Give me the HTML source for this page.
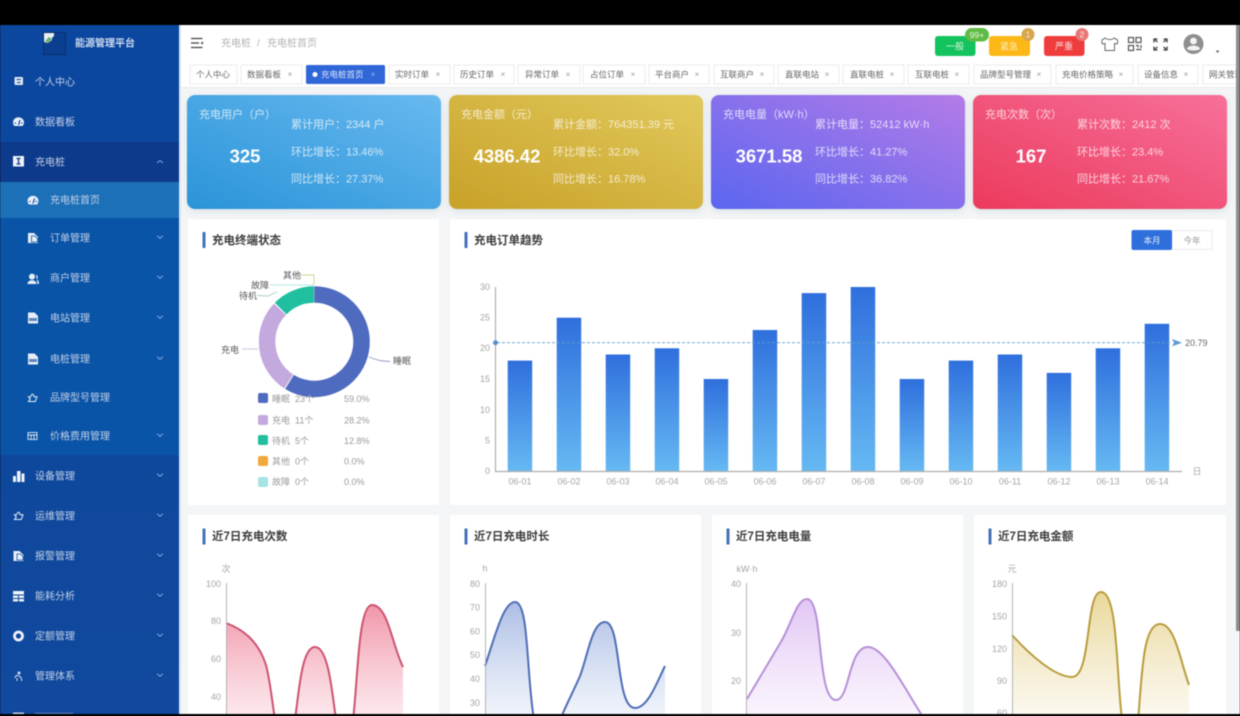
<!DOCTYPE html>
<html lang="zh-CN">
<head>
<meta charset="utf-8">
<title>能源管理平台</title>
<style>
html,body{margin:0;padding:0;background:#000;width:1240px;height:716px;overflow:hidden}
svg{display:block;filter:blur(.55px)}
text{font-family:"Liberation Sans","Noto Sans CJK SC",sans-serif;dominant-baseline:central;transform:translateY(.6px)}
.m{font-size:10px;fill:#c2d0e6}
.t{font-size:8.5px;fill:#666}
.x{font-size:8px;fill:#999;text-anchor:middle}
.k{font-size:11px;fill:#fff;fill-opacity:.74}
.n{font-size:18.5px;font-weight:700;fill:#fff;text-anchor:middle}
.h{font-size:11.5px;font-weight:700;fill:#3d3d3d}
.a{font-size:9px;fill:#a5a5a5}
.e{text-anchor:end}
.c{text-anchor:middle}
.l{font-size:9px;fill:#999}
.p{font-size:9px;fill:#555}
</style>
</head>
<body>
<svg width="1240" height="716" viewBox="0 0 1240 716" xmlns="http://www.w3.org/2000/svg">
<defs>
<linearGradient id="k1" x1="0" y1="1" x2="1" y2="0"><stop offset="0" stop-color="#2a94d8"/><stop offset="1" stop-color="#68b9f0"/></linearGradient>
<linearGradient id="k2" x1="0" y1="1" x2="1" y2="0"><stop offset="0" stop-color="#c8a128"/><stop offset="1" stop-color="#e2c95c"/></linearGradient>
<linearGradient id="k3" x1="0" y1="1" x2="1" y2="0"><stop offset="0" stop-color="#5a66f0"/><stop offset="1" stop-color="#b47be8"/></linearGradient>
<linearGradient id="k4" x1="0" y1="1" x2="1" y2="0"><stop offset="0" stop-color="#ec3a5c"/><stop offset="1" stop-color="#f7709a"/></linearGradient>
<linearGradient id="bar" x1="0" y1="0" x2="0" y2="1"><stop offset="0" stop-color="#2f6fdd"/><stop offset="1" stop-color="#66b9f3"/></linearGradient>
<linearGradient id="side" x1="0" y1="0" x2="0" y2="1"><stop offset="0" stop-color="#0c479f"/><stop offset="1" stop-color="#10499d"/></linearGradient>
<linearGradient id="f1" x1="0" y1="0" x2="0" y2="1"><stop offset="0" stop-color="#ee7a93" stop-opacity=".8"/><stop offset="1" stop-color="#fcdfe6" stop-opacity=".5"/></linearGradient>
<linearGradient id="f2" x1="0" y1="0" x2="0" y2="1"><stop offset="0" stop-color="#9db2e0" stop-opacity=".85"/><stop offset="1" stop-color="#eef3fb" stop-opacity=".55"/></linearGradient>
<linearGradient id="f3" x1="0" y1="0" x2="0" y2="1"><stop offset="0" stop-color="#dcbcf3" stop-opacity=".85"/><stop offset="1" stop-color="#faf3fd" stop-opacity=".55"/></linearGradient>
<linearGradient id="f4" x1="0" y1="0" x2="0" y2="1"><stop offset="0" stop-color="#e6d088" stop-opacity=".85"/><stop offset="1" stop-color="#fbf8ec" stop-opacity=".55"/></linearGradient>
<filter id="sh" x="-10%" y="-20%" width="120%" height="140%"><feDropShadow dx="0" dy="2" stdDeviation="4" flood-color="#8aa" flood-opacity=".28"/></filter>

<g id="chev"><polyline points="-3,-1.3 0,1.3 3,-1.3" fill="none" stroke="#7fa3d6" stroke-width="1"/></g>
<g id="gauge"><path d="M-4,4 A5.5,5.2 0 1 1 4,4 Z" fill="#e8eef8"/><path d="M0,3 L1.5,-2" stroke="#0c479f" stroke-width="1.2"/><path d="M-4,1h1.5M2.5,1h1.5" stroke="#0c479f" stroke-width=".9"/></g>
<g id="doc"><path d="M-5,-5 H1 L5,-1 V5 H-5 Z" fill="#e8eef8"/><path d="M-1.5,-2 H2 L4.5,.5 V4 H-1.5 Z" fill="#e8eef8" stroke="#0c4f9f" stroke-width=".8"/></g>
<g id="pdf"><path d="M-5,-5.5 H1.5 L5,-2 V5.5 H-5 Z" fill="#e8eef8"/><rect x="-4" y="0" width="8" height="3" fill="#5c86bd"/></g>
<g id="user"><circle cx="-1" cy="-2.4" r="3" fill="#e8eef8"/><path d="M-5.5,5 C-5.5,0 3.5,0 3.5,5 Z" fill="#e8eef8"/><path d="M3,-4.5 C5.5,-3 5,0 3.5,.5 C5.500,1 6,3 6,5 H4.5" fill="#e8eef8"/></g>
<g id="bag"><path d="M-4,-1.2 H-2 L-.5,-3.8 C1,-3.800 1.500,-2.500 1.500,-1.200 H4.500 L2.800,3.500 H-4 L-2.200,1 Z" fill="none" stroke="#e8eef8" stroke-width="1"/></g>
</defs>

<!-- page base -->
<rect x="0" y="0" width="1240" height="716" fill="#f4f5f7"/>

<!-- header -->
<rect x="179" y="25" width="1057" height="35" fill="#fff"/>
<rect x="179" y="60" width="1057" height="27" fill="#fff"/>
<rect x="179" y="87" width="1057" height="1" fill="#e9eaec"/>
<path d="M191,38.5h11.5M191,43h8M191,47.5h11.5" stroke="#444" stroke-width="1.2" fill="none"/>
<path d="M203,41.5 L200.5,43 L203,44.5Z" fill="#444"/>
<text x="221" y="43.5" style="font-size:10px;fill:#b3b3b3">充电桩</text>
<text x="257" y="43.5" style="font-size:10px;fill:#b3b3b3">/</text>
<text x="267" y="43.5" style="font-size:10px;fill:#b3b3b3">充电桩首页</text>

<rect x="935" y="36" width="40.5" height="20" rx="3" fill="#13c35e"/>
<text x="955" y="46" class="c" style="font-size:9px;fill:#d8f8df">一般</text>
<rect x="965" y="28" width="24" height="13.5" rx="6.7" fill="#60bb46"/>
<text x="977" y="34.5" class="c" style="font-size:8.5px;fill:#e8f7dc">99+</text>
<rect x="989" y="36" width="41" height="20" rx="3" fill="#fcb816"/>
<text x="1009" y="46" class="c" style="font-size:9px;fill:#ffeec0">紧急</text>
<circle cx="1028" cy="34.5" r="6.5" fill="#d9a650"/>
<text x="1028" y="34.5" class="c" style="font-size:8px;fill:#f8e4bb">1</text>
<rect x="1044" y="36" width="40.5" height="20" rx="3" fill="#ef3d3d"/>
<text x="1064" y="46" class="c" style="font-size:9px;fill:#ffdcdc">严重</text>
<circle cx="1082" cy="34.5" r="6.5" fill="#ea7777"/>
<text x="1082" y="34.5" class="c" style="font-size:8px;fill:#ffe6e6">2</text>

<path d="M1105.500,38 L1102.500,39.500 C1101.500,40.500 1101.500,42.500 1102.500,44 L1105,43.500 V50.500 H1114.500 V43.500 L1117,44 C1118,42.500 1118,40.500 1117,39.500 L1114,38 C1112.500,40 1107,40 1105.500,38 Z" fill="none" stroke="#666" stroke-width="1"/>
<g fill="none" stroke="#555" stroke-width="1.2">
<rect x="1128.500" y="37.500" width="5" height="5"/><rect x="1136" y="37.500" width="5" height="5"/><rect x="1128.500" y="45.500" width="5" height="5"/>
<path d="M1136,45.500h2v2M1141,45v3M1136,49.500h5.500"/>
</g>
<g fill="none" stroke="#444" stroke-width="1.300">
<path d="M1154,39l3.500,3M1154,42.500v-3.500h3.500M1167,39l-3.500,3M1167,42.500v-3.500h-3.500M1154,50l3.500,-3M1154,46.500v3.500h3.500M1167,50l-3.500,-3M1167,46.500v3.500h-3.500"/>
</g>
<circle cx="1193.500" cy="44" r="10" fill="#8f8f8f"/>
<circle cx="1193.500" cy="41" r="3.400" fill="#f3f3f3"/>
<path d="M1187,49 C1187.500,44.500 1199.500,44.500 1200,49 C1198,51 1189,51 1187,49Z" fill="#f3f3f3"/>
<path d="M1215.800,50.600 h3.600 l-1.800,2.400Z" fill="#555"/>

<!-- tabs -->
<g fill="#fff" stroke="#e8e8e8" stroke-width=".8">
<rect x="190" y="65" width="47" height="19"/><rect x="241" y="65" width="61" height="19"/>
<rect x="389" y="65" width="61" height="19"/><rect x="454" y="65" width="60" height="19"/>
<rect x="518" y="65" width="62" height="19"/><rect x="583" y="65" width="62" height="19"/>
<rect x="649" y="65" width="60" height="19"/><rect x="714" y="65" width="60" height="19"/>
<rect x="778" y="65" width="61" height="19"/><rect x="843" y="65" width="61" height="19"/>
<rect x="908" y="65" width="61" height="19"/><rect x="974" y="65" width="77" height="19"/>
<rect x="1056" y="65" width="77" height="19"/><rect x="1138" y="65" width="60" height="19"/>
<rect x="1203" y="65" width="40" height="19"/>
</g>
<rect x="306" y="65" width="79" height="19" rx="1.500" fill="#2f66d8"/>
<circle cx="315" cy="74.500" r="2.500" fill="#fff"/>
<text x="321" y="74" style="font-size:8.500px;fill:#dce6fa">充电桩首页</text>
<text x="373" y="74" class="x" style="fill:#9fb8ef">×</text>
<text x="196" y="74" class="t">个人中心</text>
<text x="247" y="74" class="t">数据看板</text><text x="290" y="74" class="x">×</text>
<text x="395" y="74" class="t">实时订单</text><text x="438" y="74" class="x">×</text>
<text x="460" y="74" class="t">历史订单</text><text x="503" y="74" class="x">×</text>
<text x="525" y="74" class="t">异常订单</text><text x="568" y="74" class="x">×</text>
<text x="590" y="74" class="t">占位订单</text><text x="633" y="74" class="x">×</text>
<text x="655" y="74" class="t">平台商户</text><text x="697" y="74" class="x">×</text>
<text x="720" y="74" class="t">互联商户</text><text x="762" y="74" class="x">×</text>
<text x="785" y="74" class="t">直联电站</text><text x="827" y="74" class="x">×</text>
<text x="850" y="74" class="t">直联电桩</text><text x="892" y="74" class="x">×</text>
<text x="915" y="74" class="t">互联电桩</text><text x="957" y="74" class="x">×</text>
<text x="980" y="74" class="t">品牌型号管理</text><text x="1039" y="74" class="x">×</text>
<text x="1062" y="74" class="t">充电价格策略</text><text x="1121" y="74" class="x">×</text>
<text x="1144" y="74" class="t">设备信息</text><text x="1186" y="74" class="x">×</text>
<text x="1209" y="74" class="t">网关管理</text>

<!-- KPI cards -->
<rect x="187" y="95" width="254" height="114" rx="8" fill="url(#k1)" filter="url(#sh)"/>
<rect x="449" y="95" width="254" height="114" rx="8" fill="url(#k2)" filter="url(#sh)"/>
<rect x="711" y="95" width="254" height="114" rx="8" fill="url(#k3)" filter="url(#sh)"/>
<rect x="973" y="95" width="254" height="114" rx="8" fill="url(#k4)" filter="url(#sh)"/>

<text x="199" y="114.500" class="k">充电用户（户）</text>
<text x="245" y="155.500" class="n">325</text>
<text x="291" y="124.500" class="k">累计用户：2344 户</text>
<text x="291" y="152" class="k">环比增长：13.46%</text>
<text x="291" y="179" class="k">同比增长：27.37%</text>

<text x="461" y="114.500" class="k">充电金额（元）</text>
<text x="507" y="155.500" class="n">4386.42</text>
<text x="553" y="124.500" class="k">累计金额：764351.39 元</text>
<text x="553" y="152" class="k">环比增长：32.0%</text>
<text x="553" y="179" class="k">同比增长：16.78%</text>

<text x="723" y="114.500" class="k">充电电量（kW·h）</text>
<text x="769" y="155.500" class="n">3671.58</text>
<text x="815" y="124.500" class="k">累计电量：52412 kW·h</text>
<text x="815" y="152" class="k">环比增长：41.27%</text>
<text x="815" y="179" class="k">同比增长：36.82%</text>

<text x="985" y="114.500" class="k">充电次数（次）</text>
<text x="1031" y="155.500" class="n">167</text>
<text x="1077" y="124.500" class="k">累计次数：2412 次</text>
<text x="1077" y="152" class="k">环比增长：23.4%</text>
<text x="1077" y="179" class="k">同比增长：21.67%</text>

<!-- white panels -->
<g fill="#fff">
<rect x="188" y="219" width="251" height="286"/><rect x="450" y="219" width="776" height="286"/>
<rect x="188" y="515" width="251" height="201"/><rect x="450" y="515" width="251" height="201"/>
<rect x="712" y="515" width="251" height="201"/><rect x="974" y="515" width="252" height="201"/>
</g>
<g fill="#4472b8">
<rect x="202.500" y="232" width="3" height="16"/><rect x="464.500" y="232" width="3" height="16"/>
<rect x="202.500" y="528.500" width="3" height="16"/><rect x="464.500" y="528.500" width="3" height="16"/>
<rect x="726.500" y="528.500" width="3" height="16"/><rect x="988.500" y="528.500" width="3" height="16"/>
</g>
<text x="212" y="240.500" class="h">充电终端状态</text>
<text x="474" y="240.500" class="h">充电订单趋势</text>
<text x="212" y="536.500" class="h">近7日充电次数</text>
<text x="474" y="536.500" class="h">近7日充电时长</text>
<text x="736" y="536.500" class="h">近7日充电电量</text>
<text x="998" y="536.500" class="h">近7日充电金额</text>

<!-- donut -->
<g fill="none" stroke-width="16.500" transform="rotate(-90 314.300 341.700)">
<circle cx="314.300" cy="341.700" r="47.250" stroke="#4f6bbf" stroke-dasharray="174.300 296.900"/>
<circle cx="314.300" cy="341.700" r="47.250" stroke="#c3a9de" stroke-dasharray="82.800 296.900" stroke-dashoffset="-175.200"/>
<circle cx="314.300" cy="341.700" r="47.250" stroke="#1fbf9f" stroke-dasharray="37.100 296.900" stroke-dashoffset="-259"/>
</g>
<g fill="none" stroke-width=".9">
<path d="M301,275 H314 V285" stroke="#cfd48a"/>
<path d="M270,285 H314" stroke="#b8e6e6"/>
<path d="M257,295.500 L268,296 L277,292" stroke="#a9cfc5"/>
<path d="M242,349 H258" stroke="#cdbfdc"/>
<path d="M369,357 C376,360 382,361.500 390,361.500" stroke="#8f9bbd"/>
</g>
<text x="283" y="275" class="p">其他</text>
<text x="251" y="285" class="p">故障</text>
<text x="239" y="295.500" class="p">待机</text>
<text x="221" y="349.500" class="p">充电</text>
<text x="393" y="360.500" class="p">睡眠</text>

<rect x="258" y="393" width="10" height="10" rx="2" fill="#4f6bbf"/>
<rect x="258" y="415" width="10" height="10" rx="2" fill="#c3a9de"/>
<rect x="258" y="435" width="10" height="10" rx="2" fill="#1fbf9f"/>
<rect x="258" y="456" width="10" height="10" rx="2" fill="#f0a83c"/>
<rect x="258" y="477" width="10" height="10" rx="2" fill="#a6e3e3"/>
<text x="272" y="398.500" class="l">睡眠&#160;&#160;23个</text><text x="344" y="398.500" class="l">59.0%</text>
<text x="272" y="420" class="l">充电&#160;&#160;11个</text><text x="344" y="420" class="l">28.2%</text>
<text x="272" y="440.500" class="l">待机&#160;&#160;5个</text><text x="344" y="440.500" class="l">12.8%</text>
<text x="272" y="461" class="l">其他&#160;&#160;0个</text><text x="344" y="461" class="l">0.0%</text>
<text x="272" y="481.500" class="l">故障&#160;&#160;0个</text><text x="344" y="481.500" class="l">0.0%</text>

<!-- toggle -->
<rect x="1172" y="230.500" width="40" height="19" fill="#fff" stroke="#e4e7ed" stroke-width=".8"/>
<rect x="1131.500" y="230" width="40.500" height="20" rx="2" fill="#2f6fdc"/>
<text x="1152" y="240" class="c" style="font-size:8.500px;fill:#e6effd">本月</text>
<text x="1192" y="240" class="c" style="font-size:8.500px;fill:#999">今年</text>

<!-- bars -->
<g fill="url(#bar)">
<rect x="507.700" y="360.600" width="24.500" height="110.400"/>
<rect x="556.700" y="317.700" width="24.500" height="153.300"/>
<rect x="605.700" y="354.500" width="24.500" height="116.500"/>
<rect x="654.700" y="348.300" width="24.500" height="122.700"/>
<rect x="703.700" y="379" width="24.500" height="92"/>
<rect x="752.700" y="330" width="24.500" height="141"/>
<rect x="801.700" y="293.100" width="24.500" height="177.900"/>
<rect x="850.700" y="287" width="24.500" height="184"/>
<rect x="899.700" y="379" width="24.500" height="92"/>
<rect x="948.700" y="360.600" width="24.500" height="110.400"/>
<rect x="997.700" y="354.500" width="24.500" height="116.500"/>
<rect x="1046.700" y="372.900" width="24.500" height="98.100"/>
<rect x="1095.700" y="348.300" width="24.500" height="122.700"/>
<rect x="1144.700" y="323.800" width="24.500" height="147.200"/>
</g>
<path d="M495.500,287 V471 M495,471.500 H1182" stroke="#aeaeae" stroke-width="1.200" fill="none"/>
<path d="M497,342.700 H1172" stroke="#5f9bd0" stroke-width=".8" stroke-dasharray="3 2" fill="none"/>
<circle cx="495.500" cy="342.700" r="2.500" fill="#5a8fca"/>
<path d="M1172,339 L1182,342.700 L1172,346.400 L1174,342.700Z" fill="#5f9bd0"/>
<text x="1185" y="342.500" style="font-size:9px;fill:#666">20.79</text>
<text x="1197" y="471" class="a c">日</text>
<text x="490" y="286.500" class="a e">30</text><text x="490" y="317" class="a e">25</text>
<text x="490" y="347.500" class="a e">20</text><text x="490" y="378.500" class="a e">15</text>
<text x="490" y="409.500" class="a e">10</text><text x="490" y="440" class="a e">5</text>
<text x="490" y="470.500" class="a e">0</text>
<text x="520" y="481" class="a c">06-01</text><text x="569" y="481" class="a c">06-02</text>
<text x="618" y="481" class="a c">06-03</text><text x="667" y="481" class="a c">06-04</text>
<text x="716" y="481" class="a c">06-05</text><text x="765" y="481" class="a c">06-06</text>
<text x="814" y="481" class="a c">06-07</text><text x="863" y="481" class="a c">06-08</text>
<text x="912" y="481" class="a c">06-09</text><text x="961" y="481" class="a c">06-10</text>
<text x="1010" y="481" class="a c">06-11</text><text x="1059" y="481" class="a c">06-12</text>
<text x="1108" y="481" class="a c">06-13</text><text x="1157" y="481" class="a c">06-14</text>

<!-- line charts -->
<path d="M226,623 C242,629 258,640 266,665 C270,680 272,700 275,720 L295,720 C299,690 302,647 315,647 C328,647 332,690 336,720 L353,720 C358,680 358,605 372,605 C388,605 392,645 403,667 L403,730 L226,730Z" fill="url(#f1)"/>
<path d="M226,623 C242,629 258,640 266,665 C270,680 272,700 275,720 M295,720 C299,690 302,647 315,647 C328,647 332,690 336,720 M353,720 C358,680 358,605 372,605 C388,605 392,645 403,667" fill="none" stroke="#cc5470" stroke-width="2"/>
<path d="M226.500,583 V716" stroke="#b3b3b3" fill="none"/>
<text x="226" y="568.500" class="a c">次</text>
<text x="221" y="583.500" class="a e">100</text><text x="221" y="620.500" class="a e">80</text><text x="221" y="658.500" class="a e">60</text><text x="221" y="696.500" class="a e">40</text>

<path d="M485,666 C494,640 503,602 515,602 C529,602 526,670 534,720 L560,720 C566,705 574,690 580,676 C588,655 592,622 605,622 C622,622 615,708 635,708 C648,708 657,682 665,666 L665,730 L485,730Z" fill="url(#f2)"/>
<path d="M485,666 C494,640 503,602 515,602 C529,602 526,670 534,720 M560,720 C566,705 574,690 580,676 C588,655 592,622 605,622 C622,622 615,708 635,708 C648,708 657,682 665,666" fill="none" stroke="#4f6db5" stroke-width="2"/>
<path d="M485.500,583 V716" stroke="#b3b3b3" fill="none"/>
<text x="485" y="568" class="a c">h</text>
<text x="480" y="583.500" class="a e">80</text><text x="480" y="607" class="a e">70</text><text x="480" y="631" class="a e">60</text><text x="480" y="654.500" class="a e">50</text><text x="480" y="678.500" class="a e">40</text><text x="480" y="702.500" class="a e">30</text>

<path d="M747,699 L782,640 C792,622 797,599 807,599 C824,599 816,700 836,700 C850,700 848,647 868,647 C885,647 905,690 925,720 L925,730 L747,730Z" fill="url(#f3)"/>
<path d="M747,699 L782,640 C792,622 797,599 807,599 C824,599 816,700 836,700 C850,700 848,647 868,647 C885,647 905,690 925,720" fill="none" stroke="#b790d8" stroke-width="2"/>
<path d="M746.500,583 V716" stroke="#b3b3b3" fill="none"/>
<text x="747" y="568.500" class="a c">kW·h</text>
<text x="741" y="583.500" class="a e">40</text><text x="741" y="632.500" class="a e">30</text><text x="741" y="680.500" class="a e">20</text>

<path d="M1012,635 C1030,655 1055,677 1072,677 C1092,677 1085,592 1101,592 C1118,592 1116,670 1122,720 L1138,720 C1142,680 1142,624 1160,624 C1175,624 1180,660 1189,685 L1189,730 L1012,730Z" fill="url(#f4)"/>
<path d="M1012,635 C1030,655 1055,677 1072,677 C1092,677 1085,592 1101,592 C1118,592 1116,670 1122,720 M1138,720 C1142,680 1142,624 1160,624 C1175,624 1180,660 1189,685" fill="none" stroke="#b89d3e" stroke-width="2"/>
<path d="M1012.500,583 V716" stroke="#b3b3b3" fill="none"/>
<text x="1012" y="568.500" class="a c">元</text>
<text x="1007" y="583.500" class="a e">180</text><text x="1007" y="616" class="a e">150</text><text x="1007" y="648.500" class="a e">120</text><text x="1007" y="680.500" class="a e">90</text><text x="1007" y="712.500" class="a e">60</text>

<!-- scrollbar -->
<rect x="1236" y="25" width="4" height="606" rx="1" fill="#8c8c8c"/>
<rect x="1236" y="631" width="4" height="85" fill="#f4f5f7"/>

<!-- sidebar -->
<rect x="0" y="25" width="179" height="691" fill="url(#side)"/>
<rect x="179" y="25" width="2" height="691" fill="#dbe6f5"/>
<rect x="0" y="142" width="179" height="40" fill="#0e3a8b"/>
<rect x="0" y="182" width="179" height="273" fill="#0a54a8"/>
<rect x="0" y="182" width="179" height="36" fill="#1c70b8"/>

<rect x="43.500" y="32.500" width="22" height="22" fill="#0c3e8f" stroke="#0a2f6e" stroke-width="1"/>
<path d="M44,33 h10 v3 l-2,2 v2 l-4,3 -4,-1Z" fill="#e9eef3"/>
<path d="M45,41 l4,-4 3,2 -4,4Z" fill="#6fae76"/>
<text x="75" y="43.500" style="font-size:10px;font-weight:700;fill:#cfdcef">能源管理平台</text>

<!-- 个人中心 -->
<rect x="14.500" y="77" width="8.500" height="8" rx="1" fill="#dfe7f3"/><path d="M16.500,79.500h4.500M17,82.500h3.500" stroke="#0c479f" stroke-width="1"/>
<text x="35" y="82.500" class="m">个人中心</text>
<!-- 数据看板 -->
<use href="#gauge" x="18.500" y="122"/>
<text x="35" y="122.500" class="m">数据看板</text>
<!-- 充电桩 -->
<rect x="13" y="156" width="11" height="10.500" fill="#eef2f9"/><path d="M16.500,158.500h4M16.500,164h4M18.500,158.500v5.500" stroke="#0e3a8b" stroke-width="1.300"/>
<text x="35" y="162.500" class="m">充电桩</text>
<polyline points="157,163 160,160.500 163,163" fill="none" stroke="#7fa3d6" stroke-width="1"/>

<use href="#gauge" x="33" y="200.500"/>
<text x="50" y="200.500" class="m">充电桩首页</text>
<use href="#doc" x="33" y="238"/>
<text x="50" y="238.500" class="m">订单管理</text><use href="#chev" x="160" y="237"/>
<use href="#user" x="33" y="279"/>
<text x="50" y="278.500" class="m">商户管理</text><use href="#chev" x="160" y="277"/>
<use href="#pdf" x="33" y="318"/>
<text x="50" y="318.500" class="m">电站管理</text><use href="#chev" x="160" y="317"/>
<use href="#pdf" x="33" y="359"/>
<text x="50" y="359.500" class="m">电桩管理</text><use href="#chev" x="160" y="358"/>
<use href="#bag" x="32.500" y="398"/>
<text x="50" y="398" class="m">品牌型号管理</text>
<g fill="none" stroke="#dfe7f3" stroke-width=".9"><rect x="28" y="432.500" width="9" height="7"/><path d="M28,435h9M31,435v4.500M34,435v4.500"/></g>
<text x="50" y="436.500" class="m">价格费用管理</text><use href="#chev" x="160" y="435"/>

<path d="M13,476h3v6h-3zM17,471h3.500v11h-3.500zM21.500,473.500h3v8.500h-3z" fill="#eef2f9"/>
<text x="35" y="476.500" class="m">设备管理</text><use href="#chev" x="160" y="475"/>
<use href="#bag" x="18.500" y="516"/>
<text x="35" y="516.500" class="m">运维管理</text><use href="#chev" x="160" y="515"/>
<use href="#doc" x="18.500" y="556"/>
<text x="35" y="556.500" class="m">报警管理</text><use href="#chev" x="160" y="555"/>
<path d="M13,591h11v10.500h-11z" fill="#eef2f9"/><path d="M13,595h11M13,598.500h11M18.500,595v6.500" stroke="#10499d" stroke-width="1"/>
<text x="35" y="596.500" class="m">能耗分析</text><use href="#chev" x="160" y="595"/>
<circle cx="18.500" cy="636" r="4" fill="none" stroke="#eef2f9" stroke-width="2.800"/>
<text x="35" y="636.500" class="m">定额管理</text><use href="#chev" x="160" y="635"/>
<circle cx="19" cy="673" r="1.500" fill="#cdd9ec"/><path d="M15,678 C15.500,675 18,675 19,676 C21,677 22,679 21.500,681 M17,681v-3" fill="none" stroke="#cdd9ec" stroke-width="1.100"/>
<text x="35" y="676.500" class="m">管理体系</text><use href="#chev" x="160" y="675"/>
<rect x="13" y="712.500" width="11" height="2" fill="#c8d5ea"/>
<rect x="35" y="712.500" width="38" height="2" fill="#5f82ba" opacity=".7"/>

<!-- black bars -->
<rect x="0" y="0" width="1240" height="25" fill="#000"/>
<rect x="0" y="714" width="1240" height="2" fill="#000"/>
</svg>
</body>
</html>
